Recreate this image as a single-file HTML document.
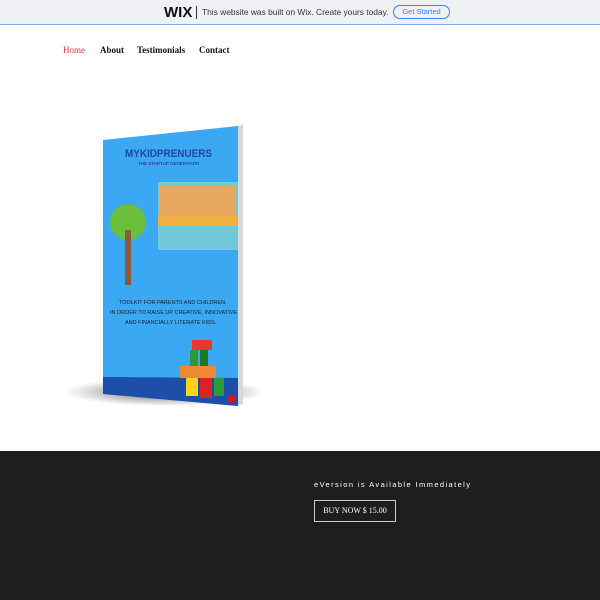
<!DOCTYPE html>
<html><head><style>
*{margin:0;padding:0;box-sizing:border-box}
body{width:600px;height:600px;overflow:hidden;background:#fff;font-family:"Liberation Sans",sans-serif;position:relative}
.bar{position:absolute;left:0;top:0;width:600px;height:25px;background:#eff1f4;border-bottom:1px solid #7aa7f0;}
.wix{position:absolute;left:164px;top:4px;font-weight:bold;font-size:15px;color:#111}
.sep{position:absolute;left:196px;top:6px;width:1px;height:13px;background:#333}
.msg{position:absolute;left:202px;top:7px;font-size:8.4px;color:#333;white-space:nowrap}
.btn{position:absolute;left:393px;top:5px;width:57px;height:14px;border:1px solid #3b82f6;border-radius:8px;font-size:7.5px;color:#3b82f6;text-align:center;line-height:12px;background:#eff1f4}
.nav{position:absolute;top:45px;font-family:"Liberation Serif",serif;font-weight:bold;font-size:9px;color:#111}
.dark{position:absolute;left:0;top:451px;width:600px;height:149px;background:#1e1e1e}
.ev{position:absolute;left:314px;top:480px;font-size:7.5px;color:#fff;letter-spacing:1.4px}
.buy{position:absolute;left:314px;top:500px;width:82px;height:22px;border:1px solid #ccc;color:#fff;font-family:"Liberation Serif",serif;font-size:8px;text-align:center;line-height:20px}
</style></head><body>
<div class="bar"><div class="wix">WIX</div><div class="sep"></div><div class="msg">This website was built on Wix. Create yours today.</div><div class="btn">Get Started</div></div>
<div class="nav" style="left:63px;color:#e0393e;font-weight:normal">Home</div>
<div class="nav" style="left:100px">About</div>
<div class="nav" style="left:137px">Testimonials</div>
<div class="nav" style="left:199px">Contact</div>
<svg style="position:absolute;left:0;top:0" width="600" height="451">
<defs><radialGradient id="sh"><stop offset="0" stop-color="#000" stop-opacity=".6"/><stop offset="1" stop-color="#000" stop-opacity="0"/></radialGradient></defs>
<ellipse cx="165" cy="392" rx="100" ry="14" fill="url(#sh)"/>
<polygon points="238,126 243,124 243,404 238,406" fill="#d8d8d8"/>
<polygon points="103,140 238,126 238,406 103,394" fill="#3aa8f2"/>
<polygon points="103,377 238,378 238,406 103,394" fill="#1e4fa8"/>
<text x="125" y="157" font-family="Liberation Sans" font-weight="bold" font-size="11" fill="#2244aa" textLength="87" lengthAdjust="spacingAndGlyphs">MYKIDPRENUERS</text>
<text x="138" y="165" font-size="4.5" fill="#1a2a66">THE STARTUP GENERATION</text>
<rect x="158" y="182" width="80" height="68" fill="#70c8d8"/>
<rect x="160" y="186" width="76" height="30" fill="#e8a860"/>
<rect x="158" y="216" width="80" height="10" fill="#f0b040"/>
<circle cx="128" cy="222" r="18" fill="#6bbf3a"/>
<rect x="125" y="230" width="6" height="55" fill="#8a5a3a"/>
<text x="119" y="304" font-size="5.5" fill="#123">TOOLKIT FOR PARENTS AND CHILDREN.</text>
<text x="110" y="314" font-size="5.5" fill="#123">IN ORDER TO RAISE UP CREATIVE, INNOVATIVE</text>
<text x="125" y="324" font-size="5.5" fill="#123">AND FINANCIALLY LITERATE KIDS.</text>
<rect x="192" y="340" width="20" height="10" fill="#e33"/>
<rect x="190" y="350" width="8" height="16" fill="#2a9a3a"/>
<rect x="200" y="350" width="8" height="16" fill="#1a7a2a"/>
<rect x="180" y="366" width="36" height="12" fill="#e83"/>
<rect x="186" y="378" width="12" height="18" fill="#ffd21e"/>
<rect x="200" y="378" width="12" height="20" fill="#d22"/>
<rect x="214" y="378" width="10" height="18" fill="#2a9a3a"/>
<circle cx="232" cy="399" r="4" fill="#d11"/>
</svg>
<div class="dark"></div>
<div class="ev">eVersion is Available Immediately</div>
<div class="buy">BUY NOW $ 15.00</div>
</body></html>
